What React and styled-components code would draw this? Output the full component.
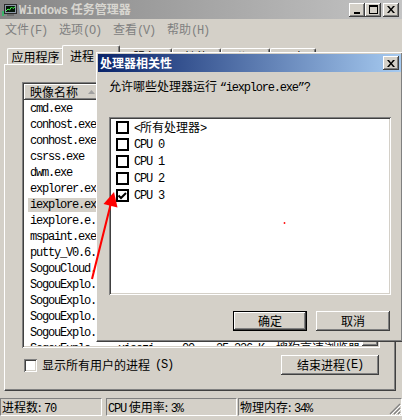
import React from 'react';
import styled, { createGlobalStyle, css } from 'styled-components';

const FACE = '#d4d0c8';

const GlobalStyle = createGlobalStyle`
  html, body { margin: 0; padding: 0; background: ${FACE}; }
  body {
    font-family: "Noto Sans CJK SC", "DejaVu Sans", sans-serif;
    font-size: 12px;
    line-height: 14px;
    color: #000;
  }
  * { box-sizing: border-box; }
`;

const raised = css`
  background: ${FACE};
  box-shadow: inset -1px -1px 0 #404040, inset 1px 1px 0 #fff, inset -2px -2px 0 #808080;
`;

const sunken = css`
  padding: 2px;
  box-shadow: inset 1px 1px 0 #808080, inset -1px -1px 0 #fff, inset 2px 2px 0 #404040, inset -2px -2px 0 ${FACE};
`;

const Lat = styled.span`
  font-family: "Liberation Mono", monospace;
  letter-spacing: ${p => (p.$wide ? '-0.2px' : '-1.2px')};
`;

const Screen = styled.div`
  position: relative;
  width: 402px;
  height: 420px;
  overflow: hidden;
  background: ${FACE};
`;

/* ---------- main window ---------- */

const TitleBar = styled.div`
  height: 19px;
  display: flex;
  align-items: center;
  padding: 0 3px 0 2px;
  background: linear-gradient(to right, #858585, #c4c4c4);
`;

const TitleText = styled.span`
  flex: 1;
  margin-left: 2px;
  font-weight: bold;
  color: #d8d6d0;
  line-height: 19px;
`;

const CtlButton = styled.div`
  ${raised};
  width: 16px;
  height: 14px;
  display: flex;
  align-items: center;
  justify-content: center;
  margin-left: ${p => p.$gap || 0}px;
`;

const MenuBar = styled.div`
  height: 21px;
  display: flex;
  align-items: center;
  padding-left: 5px;
`;

const MenuItem = styled.div`
  width: 54px;
  color: #808080;
  line-height: 14px;
`;

const TabStrip = styled.div`
  height: 24px;
  display: flex;
  align-items: flex-end;
  padding-left: 7px;
`;

const Tab = styled.div`
  position: relative;
  width: ${p => p.$w + (p.$active ? 4 : 0)}px;
  height: ${p => (p.$active ? 20 : 16)}px;
  margin: 0 ${p => (p.$active ? -2 : 0)}px ${p => (p.$active ? -1 : 0)}px;
  z-index: ${p => (p.$active ? 2 : 1)};
  background: ${FACE};
  border-top: 1px solid #fff;
  border-left: 1px solid #fff;
  border-right: 1px solid #404040;
  border-radius: 2px 2px 0 0;
  box-shadow: inset -1px 0 0 #808080;
  text-align: ${p => (p.$active ? 'left' : 'center')};
  padding: ${p => (p.$active ? '2px 0 0 7px' : '0')};
  line-height: 15px;
`;

const TabPanel = styled.div`
  height: 327px;
  margin: 0 6px 0 4px;
  border-top: 1px solid #fff;
  border-left: 1px solid #fff;
  border-right: 1px solid #404040;
  border-bottom: 1px solid #404040;
  box-shadow: inset -1px -1px 0 #808080;
  padding: 17px 15px 0 17px;
  display: flex;
  flex-direction: column;
`;

const ListView = styled.div`
  ${sunken};
  height: 266px;
  background: #fff;
  display: grid;
  grid-template-columns: 1fr 16px;
  overflow: hidden;
`;

const ListMain = styled.div`
  display: flex;
  flex-direction: column;
  overflow: hidden;
`;

const HeaderRow = styled.div`
  display: flex;
  height: 16px;
  flex: none;
`;

const HeaderCell = styled.div`
  ${raised};
  width: ${p => p.$w}px;
  flex: ${p => (p.$w ? 'none' : 1)};
  display: flex;
  align-items: center;
  padding-left: 6px;
  line-height: 14px;
  white-space: nowrap;
  overflow: hidden;
`;

const SortArrow = styled.svg`
  margin-left: 10px;
`;

const Row = styled.div`
  display: flex;
  height: 16px;
  flex: none;
  align-items: center;
  white-space: nowrap;
`;

const Cell = styled.div`
  width: ${p => p.$w}px;
  flex: ${p => (p.$w ? 'none' : 1)};
  overflow: hidden;
  text-align: ${p => p.$align || 'left'};
  padding: ${p => (p.$align === 'right' ? '0 6px 0 0' : '0 0 0 6px')};
  line-height: 14px;
`;

const NameLabel = styled(Lat)`
  display: inline-block;
  margin-left: -2px;
  padding: 0 2px;
  background: ${p => (p.$selected ? FACE : 'transparent')};
`;

const ScrollBar = styled.div`
  display: flex;
  flex-direction: column;
`;

const ScrollBtn = styled.div`
  ${raised};
  height: 16px;
  flex: none;
  display: flex;
  align-items: center;
  justify-content: center;
`;

const ScrollTrack = styled.div`
  flex: 1;
  background: repeating-conic-gradient(#fff 0 25%, ${FACE} 0 50%) 0 0 / 2px 2px;
`;

const ScrollThumb = styled.div`
  ${raised};
  height: 40px;
`;

const PanelFooter = styled.div`
  margin-top: 7px;
  height: 20px;
  display: flex;
  align-items: center;
  justify-content: space-between;
  padding: 0 1px 0 2px;
`;

const CheckLabel = styled.label`
  display: flex;
  align-items: center;
  gap: 5px;
  line-height: 14px;
`;

const Check3D = styled.span`
  width: 13px;
  height: 13px;
  background: #fff;
  box-shadow: inset 1px 1px 0 #808080, inset -1px -1px 0 #fff, inset 2px 2px 0 #404040, inset -2px -2px 0 ${FACE};
`;

const Button = styled.div`
  ${raised};
  width: ${p => p.$w}px;
  height: 20px;
  display: flex;
  align-items: center;
  justify-content: center;
  line-height: 14px;
  ${p =>
    p.$default &&
    css`
      border: 1px solid #000;
      box-shadow: inset -1px -1px 0 #404040, inset 1px 1px 0 #fff, inset -2px -2px 0 #808080;
    `}
`;

const StatusBar = styled.div`
  margin-top: 7px;
  height: 18px;
  display: flex;
`;

const StatusPane = styled.div`
  position: relative;
  width: ${p => p.$w}px;
  margin-left: ${p => p.$gap || 0}px;
  border: 1px solid;
  border-color: #808080 #fff #fff #808080;
  padding-left: 1px;
  line-height: 16px;
  white-space: nowrap;
`;

const Grip = styled.svg`
  position: absolute;
  right: 0;
  bottom: 0;
`;

/* ---------- affinity dialog ---------- */

const Dialog = styled.div`
  position: absolute;
  z-index: 10;
  left: 96px;
  top: 52px;
  width: 307px;
  height: 290px;
  background: ${FACE};
  border: 1px solid;
  border-color: #fff #404040 #404040 #fff;
  box-shadow: inset -1px -1px 0 #808080;
  padding: 1px;
  display: flex;
  flex-direction: column;
`;

const DialogTitle = styled.div`
  height: 18px;
  flex: none;
  display: flex;
  align-items: center;
  justify-content: space-between;
  padding: 0 2px;
  background: linear-gradient(to right, #0a246a, #a6caf0);
  color: #fff;
  font-weight: bold;
`;

const DialogBody = styled.div`
  flex: 1;
  padding: 7px 10px 0 11px;
  display: flex;
  flex-direction: column;
`;

const Prompt = styled.div`
  line-height: 14px;
  white-space: nowrap;
`;

const CpuList = styled.div`
  ${sunken};
  margin-top: 22px;
  height: 178px;
  background: #fff;
`;

const CpuItem = styled.div`
  height: 17px;
  display: flex;
  align-items: center;
  gap: 5px;
  padding-left: 5px;
  line-height: 14px;
`;

const FlatBox = styled.span`
  width: 13px;
  height: 13px;
  border: 2px solid #000;
  background: #fff;
  display: flex;
  align-items: center;
  justify-content: center;
`;

const ButtonRow = styled.div`
  margin-top: 16px;
  display: flex;
  justify-content: flex-end;
  gap: 9px;
  padding-right: 1px;
`;

const Overlay = styled.svg`
  position: absolute;
  z-index: 20;
  left: 0;
  top: 0;
  pointer-events: none;
`;

/* ---------- data ---------- */

const menus = [
  ['文件', '(F)'],
  ['选项', '(O)'],
  ['查看', '(V)'],
  ['帮助', '(H)'],
];

const tabs = [
  { label: '应用程序', w: 57 },
  { label: '进程', w: 54, active: true },
  { label: '服务', w: 54 },
  { label: '性能', w: 49 },
  { label: '联网', w: 49 },
  { label: '用户', w: 46 },
];

const sogou = { name: 'SogouExplo...', user: 'xiaozi', cpu: '00', mem: '25,236 K', desc: '搜狗高速浏览器' };

const processes = [
  { name: 'cmd.exe', user: 'xiaozi', cpu: '00', mem: '1,824 K', desc: 'Windows 命令处理程序' },
  { name: 'conhost.exe', user: 'xiaozi', cpu: '00', mem: '3,116 K', desc: '控制台窗口主进程' },
  { name: 'conhost.exe', user: 'xiaozi', cpu: '00', mem: '2,948 K', desc: '控制台窗口主进程' },
  { name: 'csrss.exe', user: '', cpu: '00', mem: '1,540 K', desc: '' },
  { name: 'dwm.exe', user: 'xiaozi', cpu: '00', mem: '1,372 K', desc: '桌面窗口管理器' },
  { name: 'explorer.exe', user: 'xiaozi', cpu: '00', mem: '32,604 K', desc: 'Windows 资源管理器' },
  { name: 'iexplore.exe', user: 'xiaozi', cpu: '00', mem: '18,220 K', desc: 'Internet Explorer', selected: true },
  { name: 'iexplore.e...', user: 'xiaozi', cpu: '00', mem: '41,008 K', desc: 'Internet Explorer' },
  { name: 'mspaint.exe', user: 'xiaozi', cpu: '00', mem: '11,872 K', desc: '画图' },
  { name: 'putty_V0.6...', user: 'xiaozi', cpu: '00', mem: '2,412 K', desc: 'SSH, Telnet' },
  { name: 'SogouCloud...', user: 'xiaozi', cpu: '00', mem: '6,532 K', desc: '搜狗输入法' },
  sogou, sogou, sogou, sogou, sogou,
];

const cpus = ['CPU 0', 'CPU 1', 'CPU 2', 'CPU 3'];

/* ---------- icons ---------- */

const AppIcon = () => (
  <svg width="15" height="14" viewBox="0 0 15 14">
    <rect x="0" y="8" width="2" height="5" fill="#3bb56b" />
    <rect x="2.5" y="1.5" width="12" height="9" fill="#8c98a8" stroke="#2a2a2a" />
    <rect x="4" y="3" width="9" height="6" fill="#06150a" />
    <polyline points="4,8 6,6 7.5,7 9.5,4 11,5.5 13,4" stroke="#3dff4a" strokeWidth="1" fill="none" />
    <rect x="5" y="11" width="7" height="2" fill="#6d6d6d" />
  </svg>
);

const MinGlyph = () => (
  <svg width="8" height="8" viewBox="0 0 8 8">
    <rect x="1" y="6" width="6" height="2" fill="#000" />
  </svg>
);

const MaxGlyph = () => (
  <svg width="9" height="9" viewBox="0 0 9 9">
    <rect x="0.5" y="0.5" width="8" height="8" fill="none" stroke="#000" />
    <rect x="0" y="0" width="9" height="2" fill="#000" />
  </svg>
);

const CloseGlyph = () => (
  <svg width="8" height="7" viewBox="0 0 8 7">
    <path d="M0 0h2l2 2.5L6 0h2L5 3.5 8 7H6L4 4.5 2 7H0l3-3.5z" fill="#000" />
  </svg>
);

const DownGlyph = () => (
  <svg width="7" height="4" viewBox="0 0 7 4">
    <path d="M0 0h7L3.5 4z" fill="#000" />
  </svg>
);

const UpGlyph = () => (
  <svg width="7" height="4" viewBox="0 0 7 4">
    <path d="M0 4h7L3.5 0z" fill="#000" />
  </svg>
);

const Tick = () => (
  <svg width="9" height="8" viewBox="0 0 9 8">
    <path d="M0.5 3.5 L3 6 L8 1" stroke="#000" strokeWidth="2" fill="none" />
  </svg>
);

const App = () => (
  <>
    <GlobalStyle />
    <Screen>
      <TitleBar>
        <AppIcon />
        <TitleText>
          <Lat $wide>Windows</Lat> 任务管理器
        </TitleText>
        <CtlButton><MinGlyph /></CtlButton>
        <CtlButton><MaxGlyph /></CtlButton>
        <CtlButton $gap={2}><CloseGlyph /></CtlButton>
      </TitleBar>

      <MenuBar>
        {menus.map(([label, key]) => (
          <MenuItem key={label}>
            {label}
            <Lat>{key}</Lat>
          </MenuItem>
        ))}
      </MenuBar>

      <TabStrip>
        {tabs.map(t => (
          <Tab key={t.label} $w={t.w} $active={t.active}>{t.label}</Tab>
        ))}
      </TabStrip>

      <TabPanel>
        <ListView>
          <ListMain>
            <HeaderRow>
              <HeaderCell $w={88}>
                映像名称
                <SortArrow width="7" height="4" viewBox="0 0 7 4">
                  <path d="M0 4h7L3.5 0z" fill="#a0a0a0" />
                </SortArrow>
              </HeaderCell>
              <HeaderCell $w={60}>用户名</HeaderCell>
              <HeaderCell $w={28}><Lat>CPU</Lat></HeaderCell>
              <HeaderCell $w={70}>内存(...</HeaderCell>
              <HeaderCell>描述</HeaderCell>
            </HeaderRow>
            {processes.map((p, i) => (
              <Row key={i}>
                <Cell $w={88}>
                  <NameLabel $selected={p.selected}>{p.name}</NameLabel>
                </Cell>
                <Cell $w={60}><Lat>{p.user}</Lat></Cell>
                <Cell $w={28} $align="right"><Lat>{p.cpu}</Lat></Cell>
                <Cell $w={70} $align="right"><Lat>{p.mem}</Lat></Cell>
                <Cell>{p.desc}</Cell>
              </Row>
            ))}
          </ListMain>
          <ScrollBar>
            <ScrollBtn><UpGlyph /></ScrollBtn>
            <ScrollTrack>
              <ScrollThumb />
            </ScrollTrack>
            <ScrollBtn><DownGlyph /></ScrollBtn>
          </ScrollBar>
        </ListView>

        <PanelFooter>
          <CheckLabel>
            <Check3D />
            显示所有用户的进程<Lat>(S)</Lat>
          </CheckLabel>
          <Button $w={98}>结束进程<Lat>(E)</Lat></Button>
        </PanelFooter>
      </TabPanel>

      <StatusBar>
        <StatusPane $w={102}>进程数: <Lat>70</Lat></StatusPane>
        <StatusPane $w={131} $gap={4}><Lat>CPU</Lat> 使用率: <Lat>3%</Lat></StatusPane>
        <StatusPane $w={164} $gap={1}>
          物理内存: <Lat>34%</Lat>
          <Grip width="12" height="12" viewBox="0 0 12 12">
            <path d="M11 1L1 11M11 5L5 11M11 9L9 11" stroke="#808080" strokeWidth="1.2" />
            <path d="M12 2L2 12M12 6L6 12M12 10L10 12" stroke="#fff" strokeWidth="1" />
          </Grip>
        </StatusPane>
      </StatusBar>

      <Dialog>
        <DialogTitle>
          处理器相关性
          <CtlButton><CloseGlyph /></CtlButton>
        </DialogTitle>
        <DialogBody>
          <Prompt>
            允许哪些处理器运行 <Lat>“iexplore.exe”?</Lat>
          </Prompt>
          <CpuList>
            <CpuItem>
              <FlatBox />
              <span><Lat>&lt;</Lat>所有处理器<Lat>&gt;</Lat></span>
            </CpuItem>
            {cpus.map((c, i) => (
              <CpuItem key={c}>
                <FlatBox>{i === 3 && <Tick />}</FlatBox>
                <Lat>{c}</Lat>
              </CpuItem>
            ))}
          </CpuList>
          <ButtonRow>
            <Button $w={74} $default>确定</Button>
            <Button $w={74}>取消</Button>
          </ButtonRow>
        </DialogBody>
      </Dialog>

      <Overlay width="402" height="420" viewBox="0 0 402 420">
        <line x1="92" y1="279" x2="110.5" y2="205" stroke="#ff0000" strokeWidth="2" />
        <polygon points="114,192 117.5,207.5 103.5,204" fill="#ff0000" />
        <path d="M283.5 223h2M284.5 222v2" stroke="#ff2020" strokeWidth="1" />
      </Overlay>
    </Screen>
  </>
);

export default App;
